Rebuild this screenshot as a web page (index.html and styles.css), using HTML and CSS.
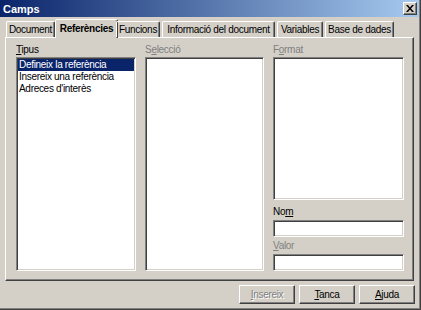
FILE: index.html
```html
<!DOCTYPE html>
<html lang="ca">

<head>
    <meta charset="UTF-8">
    <meta name="viewport" content="width=device-width, initial-scale=1.0">
    <title>Camps</title>
    <link rel="stylesheet" href="styles.css">
</head>

<body>
    <div class="window">
        <div class="titlebar">
            <span class="title">Camps</span>
            <span class="close">
                <svg width="8" height="7" viewBox="0 0 8 7">
                    <path d="M0 0h2l2 2.5L6 0h2L5 3.5 8 7H6L4 4.5 2 7H0l3-3.5z" fill="#000" />
                </svg>
            </span>
        </div>

        <div class="tabs">
            <div class="tab tab-doc">Document</div>
            <div class="tab tab-ref active">Referències</div>
            <div class="tab tab-fun">Funcions</div>
            <div class="tab tab-info">Informació del document</div>
            <div class="tab tab-var">Variables</div>
            <div class="tab tab-db">Base de dades</div>
        </div>

        <div class="panel">
            <div class="col">
                <div class="label"><u>T</u>ipus</div>
                <div class="field list">
                    <div class="item selected">Defineix la referència</div>
                    <div class="item">Insereix una referència</div>
                    <div class="item">Adreces d'interès</div>
                </div>
            </div>
            <div class="col">
                <div class="label disabled">S<u>e</u>lecció</div>
                <div class="field list"></div>
            </div>
            <div class="col">
                <div class="label disabled">F<u>o</u>rmat</div>
                <div class="field list format"></div>
                <div class="label name-label">No<u>m</u></div>
                <div class="field input"></div>
                <div class="label disabled value-label"><u>V</u>alor</div>
                <div class="field input"></div>
            </div>
        </div>

        <div class="buttons">
            <div class="btn disabled"><u>I</u>nsereix</div>
            <div class="btn"><u>T</u>anca</div>
            <div class="btn"><u>A</u>juda</div>
        </div>
    </div>
</body>

</html>
```

FILE: styles.css
```css
html,
body {
    margin: 0;
    width: 421px;
    height: 310px;
    overflow: hidden;
}

body {
    font-family: "Liberation Sans", Arial, sans-serif;
    font-size: 10px;
    letter-spacing: -0.3px;
    color: #000;
    background: #d4d0c8;
}

.window {
    width: 420px;
    height: 309px;
    border-right: 1px solid #404040;
    border-bottom: 1px solid #404040;
    box-shadow: inset -1px -1px #808080;
    background: #d4d0c8;
    display: flex;
    flex-direction: column;
}

/* barra de titol */
.titlebar {
    height: 17px;
    flex: none;
    margin-right: 1px;
    background: linear-gradient(to right, #0a246a, #a6caf0);
    display: flex;
    align-items: center;
    justify-content: space-between;
    padding: 0 2px 0 3px;
}

.title {
    color: #fff;
    font-weight: bold;
    font-size: 11px;
    letter-spacing: 0;
}

.close {
    width: 14px;
    height: 13px;
    background: #d4d0c8;
    box-sizing: border-box;
    border: 1px solid;
    border-color: #fff #404040 #404040 #fff;
    box-shadow: inset -1px -1px #808080;
    display: flex;
    align-items: center;
    justify-content: center;
}

/* pestanyes */
.tabs {
    display: flex;
    flex: none;
    align-items: flex-end;
    height: 19px;
    margin-top: 1px;
    padding-left: 6px;
    position: relative;
    z-index: 1;
}

.tab {
    box-sizing: border-box;
    height: 16px;
    line-height: 15px;
    padding: 0;
    margin-right: 2px;
    text-align: center;
    border: 1px solid;
    border-bottom: none;
    border-color: #fff #404040 transparent #fff;
    box-shadow: inset -1px 0 #808080;
    border-radius: 2px 2px 0 0;
    white-space: nowrap;
}

.tab-doc { width: 49px; }
.tab-ref { width: 63px; }
.tab-fun { width: 44px; }
.tab-info { width: 113px; }
.tab-var { width: 46px; }
.tab-db { width: 69px; }

.tab.active {
    height: 19px;
    line-height: 17px;
    font-weight: bold;
    margin: 0 0 -1px -2px;
    padding-bottom: 1px;
    background: #d4d0c8;
}

.tab.active + .tab {
    margin-left: -2px;
}

.panel {
    flex: none;
    margin: 0 6px 0 5px;
    height: 244px;
    box-sizing: border-box;
    border: 1px solid;
    border-color: #fff #404040 #404040 #fff;
    box-shadow: inset -1px -1px #808080;
    padding: 5px 10px 9px 10px;
    display: grid;
    grid-template-columns: 120px 119px 131px;
    column-gap: 9px;
}

.col {
    display: flex;
    flex-direction: column;
}

.label {
    height: 14px;
    line-height: 13px;
}

.label.disabled {
    color: #808080;
}

.field {
    box-sizing: border-box;
    background: #fff;
    border: 1px solid;
    border-color: #808080 #fff #fff #808080;
    box-shadow: inset 1px 1px #404040, inset -1px -1px #d4d0c8;
    padding: 1px;
}

.list {
    flex: 1;
}

.format {
    flex: none;
    height: 143px;
}

.name-label {
    margin-top: 5px;
}

.value-label {
    margin-top: 2px;
}

.input {
    height: 17px;
    margin-top: 1px;
}

.item {
    height: 12px;
    line-height: 12px;
    padding-left: 1px;
    white-space: nowrap;
}

.item.selected {
    background: #0a246a;
    color: #fff;
}

/* botons */
.buttons {
    display: flex;
    justify-content: flex-end;
    gap: 4px;
    padding: 4px 5px 0 0;
}

.btn {
    width: 56px;
    height: 19px;
    box-sizing: border-box;
    border: 1px solid;
    border-color: #fff #404040 #404040 #fff;
    box-shadow: inset -1px -1px #808080;
    text-align: center;
    line-height: 17px;
}

.btn.disabled {
    color: #808080;
    text-shadow: 1px 1px #fff;
}
```
